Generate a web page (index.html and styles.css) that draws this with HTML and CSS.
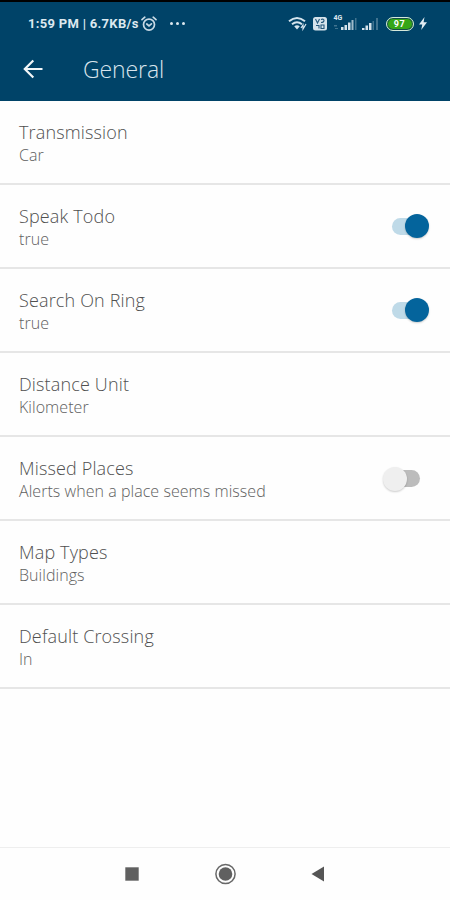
FILE: index.html
```html
<!DOCTYPE html>
<html lang="en">
<head>
<meta charset="utf-8">
<title>General</title>
<link rel="stylesheet" href="styles.css">
</head>
<body>
<div class="screen">
  <header class="header">
    <div class="status">
      <span class="clock">1:59 PM | 6.7KB/s</span>
      <svg class="alarm" width="16" height="16" viewBox="0 0 16 16" fill="none" stroke="#c9dae5" stroke-width="1.700" stroke-linecap="round"><circle cx="8" cy="8.600" r="5.500"/><path d="M1 3.600 3.800 1.200M15 3.600 12.200 1.200M5.800 8l2.200 1.800 2.400-2"/></svg>
      <span class="more"><i></i><i></i><i></i></span>
      <svg class="wifi" width="20" height="16" viewBox="0 0 20 16" fill="none" stroke="#d5e5ee" stroke-width="2"><path d="M1 5.300Q9 -1.200 17 5.300M4 8.200Q9 4.300 14 8.200"/><path d="M6.200 10.300Q9 8.300 11.800 10.300L9 13.600Z" fill="#d5e5ee" stroke="none"/><path d="m13 12 2-3v4l3-5" stroke-width="1.200"/></svg>
      <svg class="volte" width="14" height="14" viewBox="0 0 14 14"><rect width="14" height="13.500" rx="2.500" fill="#d5e3eb"/><path d="m2.500 2 2 4 2-4M8 2.500q3-1 3 1t-3 2M3 8.500h3v3M8 8h3v3.500H8Z" fill="none" stroke="#24587b" stroke-width="1.100"/></svg>
      <span class="cell"><small>4G</small><svg width="23" height="15" viewBox="0 0 23 15" fill="#d5e3eb"><path d="M7 11h2.500v3H7zM10.500 9H13v5h-2.500zM14 6.500h2.500V14H14z"/><path d="M17.500 4h2v10h-2z" opacity=".75"/><path d="M21 2h1.500v12H21zM0 9h3v1.500H0zM1 12h3v1H1z" opacity=".3"/></svg></span>
      <svg class="signal" width="17" height="15" viewBox="0 0 17 15" fill="#d5e3eb"><path d="M0 12h2.500v2H0zM3.500 9.500H6V14H3.500zM7 7h2.500v7H7z"/><path d="M10.500 5H12v9h-1.500zM14 2h2v12h-2z" opacity=".3"/></svg>
      <span class="battery">97</span>
      <svg class="bolt" width="8" height="13" viewBox="0 0 8 13"><path d="M5.500 0 0 7.500h3.300L2.200 13 8 5.200H4.600Z" fill="#e2edf3"/></svg>
    </div>
    <div class="toolbar">
      <svg class="back" width="20" height="20" viewBox="0 0 20 20" fill="none" stroke="#f2f6f8" stroke-width="2.200"><path d="M19.500 10H2M10.300 1.500 1.800 10l8.500 8.500"/></svg>
      <h1>General</h1>
    </div>
  </header>
  <main>
    <section class="row"><div><h2>Transmission</h2><p>Car</p></div></section>
    <section class="row"><div><h2>Speak Todo</h2><p>true</p></div><span class="switch on"></span></section>
    <section class="row"><div><h2>Search On Ring</h2><p>true</p></div><span class="switch on"></span></section>
    <section class="row"><div><h2>Distance Unit</h2><p>Kilometer</p></div></section>
    <section class="row"><div><h2>Missed Places</h2><p>Alerts when a place seems missed</p></div><span class="switch"></span></section>
    <section class="row"><div><h2>Map Types</h2><p>Buildings</p></div></section>
    <section class="row"><div><h2>Default Crossing</h2><p>In</p></div></section>
  </main>
  <nav class="nav">
    <svg width="14" height="14" viewBox="0 0 14 14"><path d="M.3.300h13.400v13.400H.3z" fill="#606060"/></svg>
    <svg width="22" height="22" viewBox="0 0 22 22"><circle cx="11.500" cy="11" r="9.600" fill="none" stroke="#686868" stroke-width="1.500"/><circle cx="11.500" cy="11" r="6.800" fill="#606060"/></svg>
    <svg width="14" height="16" viewBox="0 0 14 16"><path d="M13 .5v15L.5 8Z" fill="#555"/></svg>
  </nav>
</div>
</body>
</html>
```
FILE: styles.css
```css
* { box-sizing: border-box; }
body { margin: 0; background: #fefefe; font-family: "Open Sans", sans-serif; }
.screen { display: flex; flex-direction: column; width: 450px; height: 900px; overflow: hidden; }
.header { height: 100.500px; background: #004368; border-top: 2.500px solid #000; }
.status { display: flex; align-items: center; height: 43px; padding-left: 28px; color: #dce8ef; }
.clock { width: 112px; font: 700 13px/16px Roboto, sans-serif; letter-spacing: .3px; white-space: nowrap; }
.alarm { margin-left: 1px; }
.more { display: flex; gap: 3px; margin-left: 13px; }
.more i { width: 3px; height: 3px; border-radius: 50%; background: #dce8ef; }
.wifi { margin-left: 102.500px; }
.volte { margin-left: 5px; }
.cell { position: relative; display: flex; margin-left: 7px; }
.cell small { position: absolute; left: 0; top: -2px; font: 700 7px/8px Roboto, sans-serif; }
.signal { margin-left: 5px; }
.battery { width: 28px; height: 14px; margin-left: 7px; border: 1.500px solid #d5e9dc; border-radius: 7px; background: #36a616; box-shadow: inset 0 0 0 1px #174c48; font: 700 9px/12px Roboto, sans-serif; letter-spacing: .5px; text-align: center; color: #fff; }
.bolt { margin-left: 5px; }
.toolbar { display: flex; align-items: center; height: 48px; padding-left: 23px; }
h1 { margin: 0 0 0 40px; font-size: 23px; line-height: 32px; font-weight: 300; letter-spacing: -.1px; color: #d9e5ed; }
.row { display: flex; justify-content: space-between; height: 84.150px; padding: 19px 21px 0 19px; border-bottom: 2px solid #e6e6e6; }
h2 { margin: 0; font-size: 18px; line-height: 24px; font-weight: 300; letter-spacing: .15px; color: #505050; }
p { margin: 0; font-size: 16px; line-height: 22px; font-weight: 300; letter-spacing: .05px; color: #606060; }
.switch { position: relative; width: 36px; height: 17px; margin: 14px 9px 0 0; border-radius: 8.500px; background: #bcbcbc; }
.switch::before { content: ""; position: absolute; left: -1px; top: -3.500px; width: 24px; height: 24px; border-radius: 50%; background: #efefef; box-shadow: 0 1px 2px #0003; }
.switch.on { margin-right: 1px; background: #bfdae8; }
.switch.on::before { left: 13px; background: #04649c; }
.nav { display: flex; align-items: center; justify-content: space-between; height: 53px; margin-top: auto; padding: 0 125px; border-top: 1px solid #eee; }
```
